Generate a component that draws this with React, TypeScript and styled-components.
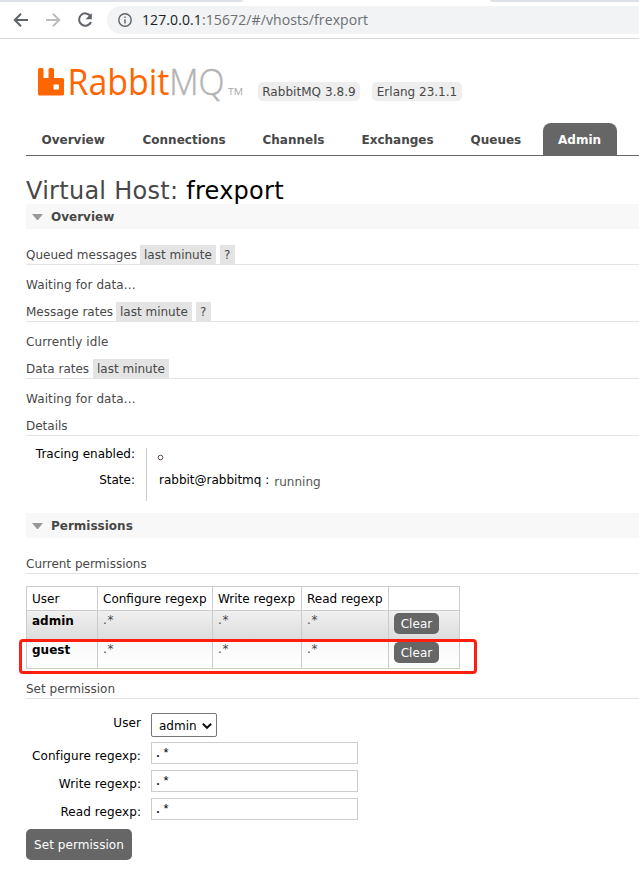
import React from "react";
import styled, { createGlobalStyle } from "styled-components";

const Global = createGlobalStyle`
  * { box-sizing: border-box; }
  body {
    margin: 0;
    background: #fff;
    color: #484848;
    font: 12px/20px "DejaVu Sans", sans-serif;
    overflow: hidden;
  }
`;

const Page = styled.div`
  width: 639px;
  height: 873px;
  overflow: hidden;
`;

const TabStrip = styled.div`
  display: flex;
  justify-content: space-between;
  height: 2px;
`;

const TabEdge = styled.div<{ $w: number; $side: "left" | "right" }>`
  width: ${(p) => p.$w}px;
  background: #dee1e6;
  border-radius: ${(p) => (p.$side === "left" ? "0 0 4px 0" : "0 0 0 4px")};
`;

const Toolbar = styled.div`
  display: flex;
  height: 37px;
  padding: 4px 0 4px 12px;
  border-bottom: 1px solid #d6d8da;
`;

const NavIcon = styled.svg`
  width: 18px;
  height: 18px;
  margin: 5px 14px 0 0;
  flex: none;
`;

const Address = styled.div`
  display: flex;
  flex: 1;
  height: 28px;
  margin-left: -1px;
  padding-left: 11px;
  border-radius: 14px 0 0 14px;
  background: #f1f3f4;
  color: #6b6f73;
  font: 14px/28px "Open Sans", sans-serif;
  letter-spacing: 0.1px;
`;

const InfoIcon = styled.svg`
  width: 14px;
  height: 14px;
  margin: 7px 10px 0 0;
`;

const Host = styled.span`
  color: #202124;
`;

const Main = styled.main`
  padding: 21px 0 0 26px;
`;

const Header = styled.header`
  display: flex;
  height: 63px;
  padding-left: 12px;
`;

const Logo = styled.svg`
  width: 208px;
  height: 60px;
  margin: -8px 12px 0 0;
  flex: none;
`;

const Version = styled.span<{ $w: number; $ls: number }>`
  width: ${(p) => p.$w}px;
  height: 19px;
  margin: 22px 12px 0 0;
  border-radius: 5px;
  background: #eee;
  line-height: 20px;
  text-align: center;
  white-space: nowrap;
  letter-spacing: ${(p) => p.$ls}px;
`;

const Tabs = styled.nav`
  display: grid;
  grid-template-columns: 101px 120px 99px 109px 87px 74px;
  grid-template-rows: 32px;
  height: 33px;
  padding-left: 1px;
  border-bottom: 1px solid #666;
`;

const Tab = styled.a<{ $active?: boolean }>`
  padding-left: ${(p) => (p.$active ? 15 : 14.5)}px;
  border-radius: 8px 8px 0 0;
  background: ${(p) => (p.$active ? "#666" : "transparent")};
  color: ${(p) => (p.$active ? "#fff" : "#484848")};
  font-weight: bold;
  line-height: 34px;
`;

const Title = styled.h1`
  height: 48px;
  margin: 0;
  font-size: 24px;
  font-weight: normal;
  line-height: 71px;
  letter-spacing: 0.27px;
  white-space: nowrap;
`;

const TitleName = styled.b`
  color: #000;
  font-weight: normal;
`;

const SectionBar = styled.h2`
  display: flex;
  align-items: center;
  height: 25px;
  margin: 0;
  padding-left: 6px;
  background: #f8f8f8;
  font-size: 12px;
  font-weight: bold;
`;

const Arrow = styled.span`
  width: 11px;
  margin: 1px 8px 0 0;
  border: solid transparent;
  border-width: 6px 5.5px 0;
  border-top-color: #999;
`;

const SubHeading = styled.h3<{ $top: number }>`
  display: flex;
  gap: 4px;
  height: 20px;
  margin: ${(p) => p.$top}px 0 0;
  border-bottom: 1px solid #e4e4e4;
  font-size: 12px;
  font-weight: normal;
  line-height: 21px;
  white-space: nowrap;
`;

const SubTitle = styled.span<{ $w?: number }>`
  width: ${(p) => (p.$w ? `${p.$w}px` : "auto")};
`;

const Tag = styled.span`
  padding: 0 4px;
  background: #e4e4e4;
`;

const HelpTag = styled(Tag)`
  width: 15px;
  padding: 0;
  text-align: center;
`;

const Note = styled.p`
  height: 20px;
  margin: 10px 0 0;
  letter-spacing: 0.1px;
`;

const Facts = styled.div`
  display: grid;
  grid-template-columns: 121px 1fr;
  margin: 12px 0;
  color: #000;
`;

const FactLabels = styled.div`
  height: 53px;
  padding-right: 11px;
  border-right: 1px solid #ccc;
  text-align: right;
`;

const FactLabel = styled.div`
  height: 26px;
  line-height: 13px;
`;

const FactValues = styled.div`
  padding: 0 0 0 12px;
`;

const FactValue = styled.div`
  display: flex;
  height: 26px;
  line-height: 13px;
`;

const OffDot = styled.svg`
  width: 7px;
  height: 7px;
  margin: 6px 0 0 -2px;
`;

const Running = styled.span`
  margin: 2px 0 0 5px;
  color: #555;
`;

const TableFrame = styled.div`
  position: relative;
  width: 434px;
  margin-top: 12px;
`;

const Table = styled.table`
  width: 434px;
  table-layout: fixed;
  border-collapse: collapse;
`;

const Row = styled.tr<{ $kind: "head" | "alt" | "plain" }>`
  height: ${(p) => (p.$kind === "head" ? 24 : 29)}px;
  background: ${(p) =>
    p.$kind === "alt"
      ? "linear-gradient(#f0f0f0, #dcdcdc)"
      : p.$kind === "plain"
      ? "linear-gradient(#f8f8f8, #fff)"
      : "#fff"};
`;

const HeadCell = styled.th<{ $w: number }>`
  width: ${(p) => p.$w}px;
  padding: 0 0 0 5px;
  border: 1px solid #ccc;
  color: #000;
  font-weight: normal;
  line-height: 22px;
  text-align: left;
  white-space: nowrap;
`;

const Cell = styled.td<{ $name?: boolean }>`
  padding: ${(p) => (p.$name ? 2 : 1)}px 0 0 5px;
  border: 1px solid #ccc;
  color: ${(p) => (p.$name ? "#000" : "#484848")};
  font-weight: ${(p) => (p.$name ? "bold" : "normal")};
  line-height: 16px;
  letter-spacing: ${(p) => (p.$name ? 0 : 0.8)}px;
  vertical-align: top;
`;

const Button = styled.button<{ $large?: boolean }>`
  display: block;
  width: ${(p) => (p.$large ? 106 : 45)}px;
  height: ${(p) => (p.$large ? 31 : 21)}px;
  margin-top: ${(p) => (p.$large ? 9 : 1)}px;
  padding: 0;
  border: 0;
  border-radius: 5px;
  background: #666;
  color: #fff;
  font: 12px "DejaVu Sans", sans-serif;
  letter-spacing: 0.05px;
  white-space: nowrap;
`;

const Highlight = styled.div`
  position: absolute;
  left: -7px;
  top: 53px;
  width: 458px;
  height: 35px;
  border: 3px solid #ff1f10;
  border-radius: 4px;
`;

const Form = styled.form`
  display: grid;
  grid-template-columns: 115px 207px;
  column-gap: 10px;
  grid-template-rows: 29px 28px 28px 22px;
  margin-top: 14px;
`;

const Label = styled.label<{ $top: number }>`
  margin-top: ${(p) => p.$top}px;
  color: #000;
  line-height: 16px;
  letter-spacing: 0.08px;
  text-align: right;
  white-space: nowrap;
`;

const Select = styled.div`
  display: flex;
  justify-content: space-between;
  align-items: center;
  width: 66px;
  height: 24px;
  padding: 1px 3px 0 7px;
  border: 1px solid #767676;
  border-radius: 2px;
  color: #000;
`;

const Chevron = styled.svg`
  width: 12px;
  height: 8px;
`;

const Input = styled.input`
  width: 207px;
  height: 22px;
  padding: 0 0 0 2px;
  border: 1px solid #ccc;
  background: #fff;
  color: #000;
  font: 13.33px "Liberation Mono", monospace;
`;

const tabs = ["Overview", "Connections", "Channels", "Exchanges", "Queues", "Admin"];
const columns: [string, number][] = [
  ["User", 71],
  ["Configure regexp", 115],
  ["Write regexp", 89],
  ["Read regexp", 87],
  ["", 71],
];
const users = ["admin", "guest"];
const fields = ["Configure regexp:", "Write regexp:", "Read regexp:"];

export default function App() {
  return (
    <Page>
      <Global />
      <TabStrip>
        <TabEdge $w={243} $side="left" />
        <TabEdge $w={149} $side="right" />
      </TabStrip>
      <Toolbar>
        <NavIcon viewBox="0 0 18 18" fill="none" stroke="#5f6368" strokeWidth="2">
          <path d="M16 9H3M9 2.8 2.8 9 9 15.2" />
        </NavIcon>
        <NavIcon viewBox="0 0 18 18" fill="none" stroke="#babcbe" strokeWidth="2">
          <path d="M2 9h13M9 2.8 15.2 9 9 15.2" />
        </NavIcon>
        <NavIcon viewBox="0 0 18 18" fill="none" stroke="#5f6368" strokeWidth="2">
          <path d="M14.5 5.2A6.2 6.2 0 1 0 15 11" />
          <path d="M15.8 2v6.3H9.5z" fill="#5f6368" stroke="none" />
        </NavIcon>
        <Address>
          <InfoIcon viewBox="0 0 14 14" fill="none" stroke="#5f6368" strokeWidth="1.4">
            <circle cx="7" cy="7" r="6.2" />
            <path d="M7 6.2v4.2M7 3.5v1.5" />
          </InfoIcon>
          <Host>127.0.0.1</Host>:15672/#/vhosts/frexport
        </Address>
      </Toolbar>
      <Main>
        <Header>
          <Logo viewBox="0 -8 208 60">
            <path
              d="M1.5 8H4q1.500 0 1.500 1.500V18h5V9.500Q10.500 8 12 8h2.500q1.500 0 1.500 1.500V18h8.500q1.500 0 1.500 1.500V34q0 1.500-1.500 1.500h-23Q0 35.500 0 34V9.500Q0 8 1.500 8z"
              fill="#f60"
            />
            <rect x="15.500" y="24.500" width="5.500" height="5" rx="1" fill="#fff" />
            <text x="29.500" y="35" fontFamily="Open Sans" fontSize="37" fill="#f60" textLength="157" lengthAdjust="spacingAndGlyphs">
              Rabbit<tspan fontWeight="300" fill="#b3b3b3" stroke="#b3b3b3" strokeWidth=".5">MQ</tspan>
            </text>
            <text x="190" y="35" fontFamily="Open Sans" fontSize="9" fill="#aaa" textLength="15" lengthAdjust="spacingAndGlyphs">
              TM
            </text>
          </Logo>
          <Version $w={102} $ls={0.05}>RabbitMQ 3.8.9</Version>
          <Version $w={90} $ls={0}>Erlang 23.1.1</Version>
        </Header>
        <Tabs>
          {tabs.map((t) => (
            <Tab key={t} $active={t === "Admin"}>{t}</Tab>
          ))}
        </Tabs>
        <Title>
          Virtual Host: <TitleName>frexport</TitleName>
        </Title>
        <SectionBar><Arrow />Overview</SectionBar>
        <SubHeading $top={16}>
          <SubTitle $w={110}>Queued messages</SubTitle>
          <Tag>last minute</Tag>
          <HelpTag>?</HelpTag>
        </SubHeading>
        <Note>Waiting for data...</Note>
        <SubHeading $top={7}>
          <SubTitle $w={86}>Message rates</SubTitle>
          <Tag>last minute</Tag>
          <HelpTag>?</HelpTag>
        </SubHeading>
        <Note>Currently idle</Note>
        <SubHeading $top={7}>
          <SubTitle $w={63}>Data rates</SubTitle>
          <Tag>last minute</Tag>
        </SubHeading>
        <Note>Waiting for data...</Note>
        <SubHeading $top={7}><SubTitle>Details</SubTitle></SubHeading>
        <Facts>
          <FactLabels>
            <FactLabel>Tracing enabled:</FactLabel>
            <FactLabel>State:</FactLabel>
          </FactLabels>
          <FactValues>
            <FactValue>
              <OffDot viewBox="0 0 7 7">
                <circle cx="3.500" cy="3.500" r="2.300" fill="none" stroke="#634a4a" />
              </OffDot>
            </FactValue>
            <FactValue>
              rabbit@rabbitmq :<Running>running</Running>
            </FactValue>
          </FactValues>
        </Facts>
        <SectionBar><Arrow />Permissions</SectionBar>
        <SubHeading $top={16}><SubTitle>Current permissions</SubTitle></SubHeading>
        <TableFrame>
          <Table>
            <thead>
              <Row $kind="head">
                {columns.map(([name, w]) => (
                  <HeadCell key={name} $w={w}>{name}</HeadCell>
                ))}
              </Row>
            </thead>
            <tbody>
              {users.map((u, i) => (
                <Row key={u} $kind={i === 0 ? "alt" : "plain"}>
                  <Cell $name>{u}</Cell>
                  <Cell>.*</Cell>
                  <Cell>.*</Cell>
                  <Cell>.*</Cell>
                  <Cell><Button>Clear</Button></Cell>
                </Row>
              ))}
            </tbody>
          </Table>
          <Highlight />
        </TableFrame>
        <SubHeading $top={10}><SubTitle>Set permission</SubTitle></SubHeading>
        <Form>
          <Label $top={2}>User</Label>
          <Select>
            admin
            <Chevron viewBox="0 0 12 8" fill="none" stroke="#111" strokeWidth="2">
              <path d="m1.800 1.800 4.200 4 4.200-4" />
            </Chevron>
          </Select>
          {fields.map((f) => (
            <React.Fragment key={f}>
              <Label $top={6}>{f}</Label>
              <Input defaultValue=".*" />
            </React.Fragment>
          ))}
        </Form>
        <Button $large>Set permission</Button>
      </Main>
    </Page>
  );
}
